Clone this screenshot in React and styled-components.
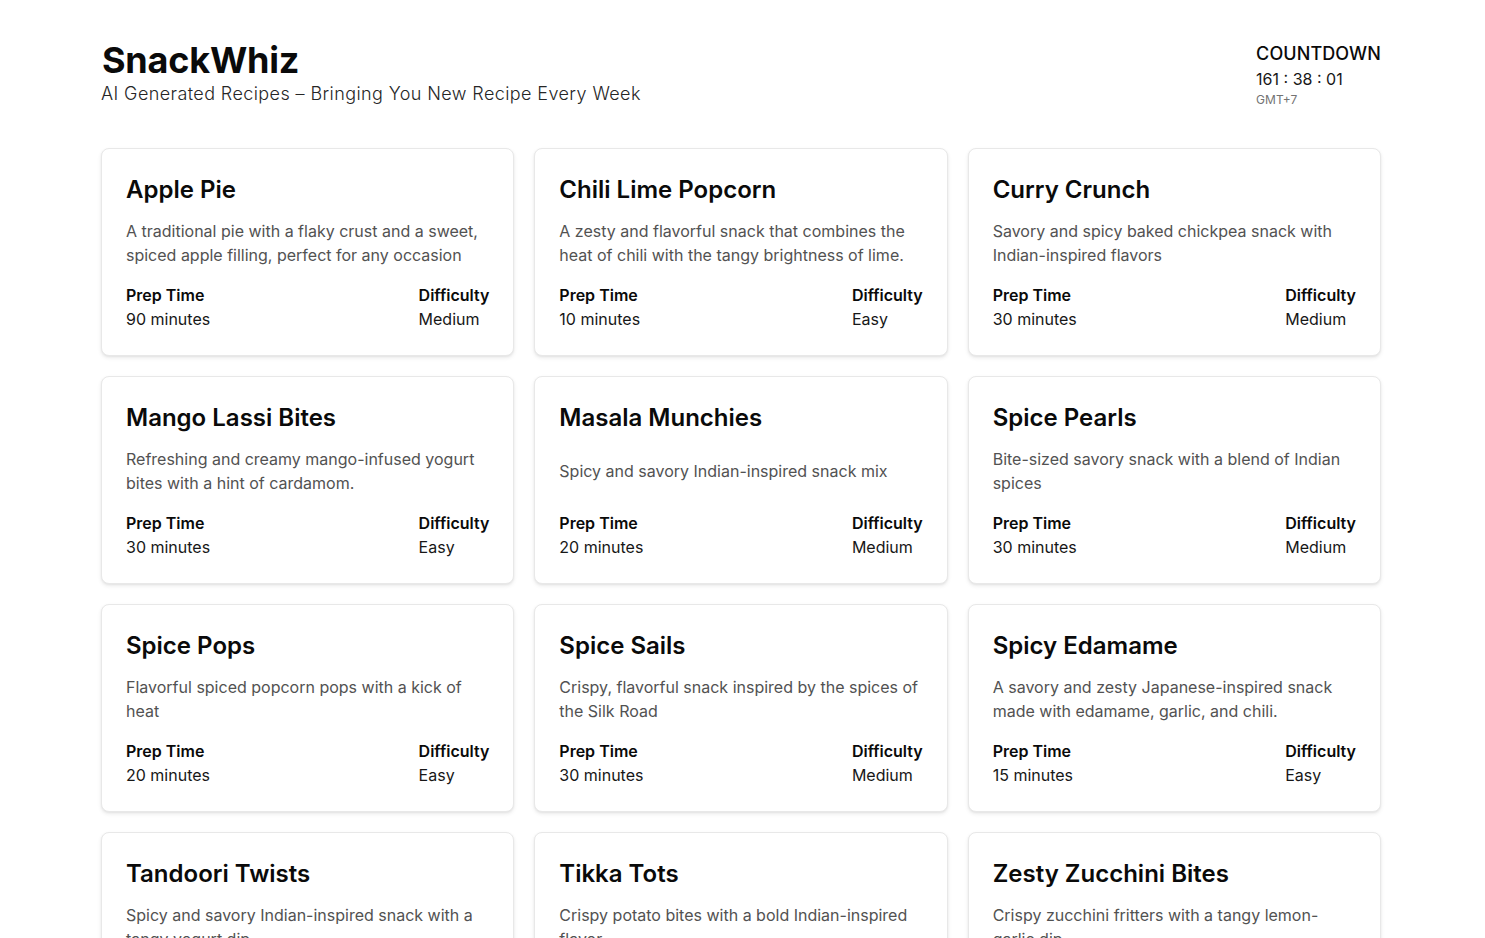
import styled, { createGlobalStyle } from 'styled-components';

const GlobalStyle = createGlobalStyle`
  * { box-sizing: border-box; }
  body {
    margin: 0;
    background: #ffffff;
    font-family: Inter, "Noto Sans", sans-serif;
    color: #0a0a0a;
  }
`;

const recipes = [
  { title: 'Apple Pie', desc: 'A traditional pie with a flaky crust and a sweet, spiced apple filling, perfect for any occasion', prep: '90 minutes', level: 'Medium' },
  { title: 'Chili Lime Popcorn', desc: 'A zesty and flavorful snack that combines the heat of chili with the tangy brightness of lime.', prep: '10 minutes', level: 'Easy' },
  { title: 'Curry Crunch', desc: 'Savory and spicy baked chickpea snack with Indian-inspired flavors', prep: '30 minutes', level: 'Medium' },
  { title: 'Mango Lassi Bites', desc: 'Refreshing and creamy mango-infused yogurt bites with a hint of cardamom.', prep: '30 minutes', level: 'Easy' },
  { title: 'Masala Munchies', desc: 'Spicy and savory Indian-inspired snack mix', prep: '20 minutes', level: 'Medium' },
  { title: 'Spice Pearls', desc: 'Bite-sized savory snack with a blend of Indian spices', prep: '30 minutes', level: 'Medium' },
  { title: 'Spice Pops', desc: 'Flavorful spiced popcorn pops with a kick of heat', prep: '20 minutes', level: 'Easy' },
  { title: 'Spice Sails', desc: 'Crispy, flavorful snack inspired by the spices of the Silk Road', prep: '30 minutes', level: 'Medium' },
  { title: 'Spicy Edamame', desc: 'A savory and zesty Japanese-inspired snack made with edamame, garlic, and chili.', prep: '15 minutes', level: 'Easy' },
  { title: 'Tandoori Twists', desc: 'Spicy and savory Indian-inspired snack with a tangy yogurt dip', prep: '25 minutes', level: 'Medium' },
  { title: 'Tikka Tots', desc: 'Crispy potato bites with a bold Indian-inspired flavor', prep: '30 minutes', level: 'Medium' },
  { title: 'Zesty Zucchini Bites', desc: 'Crispy zucchini fritters with a tangy lemon-garlic dip', prep: '20 minutes', level: 'Easy' },
];

const Page = styled.main`
  max-width: 1283px;
  margin: 0 auto;
  padding: 40px 3px 40px 0;
`;

const Header = styled.header`
  display: flex;
  justify-content: space-between;
  align-items: flex-start;
  height: 68px;
  margin-bottom: 40px;
`;

const Brand = styled.h1`
  margin: 0 0 0 1px;
  font-size: 36px;
  line-height: 40px;
  font-weight: 700;
  letter-spacing: -0.2px;
`;

const Tagline = styled.p`
  margin: 0;
  font-size: 18px;
  line-height: 28px;
  font-weight: 300;
  color: #262626;
  letter-spacing: 0.4px;
`;

const Countdown = styled.div`
  display: flex;
  flex-direction: column;
  padding-top: 2px;
`;

const CountLabel = styled.span`
  font-size: 18px;
  line-height: 24px;
  font-weight: 500;
  letter-spacing: 0.1px;
`;

const CountValue = styled.span`
  font-size: 16px;
  line-height: 26px;
  color: #171717;
`;

const CountZone = styled.span`
  font-size: 12px;
  line-height: 16px;
  color: #737373;
`;

const Grid = styled.section`
  display: grid;
  grid-template-columns: repeat(3, 1fr);
  gap: 20px;
`;

const Card = styled.article`
  display: flex;
  flex-direction: column;
  gap: 13px;
  padding: 24px;
  background: #fff;
  border: 1px solid #e8e8e8;
  border-radius: 8px;
  box-shadow: 0 2px 4px rgba(0, 0, 0, 0.08), 0 1px 2px rgba(0, 0, 0, 0.05);
`;

const Title = styled.h2`
  margin: 0;
  padding-top: 1px;
  font-size: 24px;
  line-height: 32px;
  font-weight: 600;
`;

const Desc = styled.p`
  flex: 1;
  display: flex;
  align-items: center;
  margin: 0;
  min-height: 48px;
  font-size: 16px;
  line-height: 24px;
  color: #525252;
`;

const Footer = styled.div`
  display: flex;
  justify-content: space-between;
  padding-top: 3px;
`;

const Stat = styled.div`
  display: flex;
  flex-direction: column;
  font-size: 16px;
  line-height: 24px;
`;

const StatLabel = styled.span`
  font-weight: 600;
`;

const StatValue = styled.span`
  color: #171717;
`;

export default function App() {
  return (
    <>
      <GlobalStyle />
      <Page>
        <Header>
          <div>
            <Brand>SnackWhiz</Brand>
            <Tagline>AI Generated Recipes – Bringing You New Recipe Every Week</Tagline>
          </div>
          <Countdown>
            <CountLabel>COUNTDOWN</CountLabel>
            <CountValue>161 : 38 : 01</CountValue>
            <CountZone>GMT+7</CountZone>
          </Countdown>
        </Header>
        <Grid>
          {recipes.map((r) => (
            <Card key={r.title}>
              <Title>{r.title}</Title>
              <Desc>{r.desc}</Desc>
              <Footer>
                <Stat>
                  <StatLabel>Prep Time</StatLabel>
                  <StatValue>{r.prep}</StatValue>
                </Stat>
                <Stat>
                  <StatLabel>Difficulty</StatLabel>
                  <StatValue>{r.level}</StatValue>
                </Stat>
              </Footer>
            </Card>
          ))}
        </Grid>
      </Page>
    </>
  );
}
